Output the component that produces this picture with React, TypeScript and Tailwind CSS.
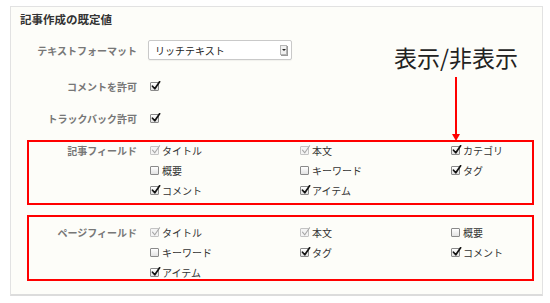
import React from "react";

type Field = { label: string; checked: boolean; disabled?: boolean };

const entryFields: Field[] = [
  { label: "タイトル", checked: true, disabled: true },
  { label: "本文", checked: true, disabled: true },
  { label: "カテゴリ", checked: true },
  { label: "概要", checked: false },
  { label: "キーワード", checked: false },
  { label: "タグ", checked: true },
  { label: "コメント", checked: true },
  { label: "アイテム", checked: true },
];

const pageFields: Field[] = [
  { label: "タイトル", checked: true, disabled: true },
  { label: "本文", checked: true, disabled: true },
  { label: "概要", checked: false },
  { label: "キーワード", checked: false },
  { label: "タグ", checked: true },
  { label: "コメント", checked: true },
  { label: "アイテム", checked: true },
];

const Checkbox = ({ checked, disabled }: { checked: boolean; disabled?: boolean }) => (
  <span
    className={`relative inline-block h-[9px] w-[9px] shrink-0 rounded-[1px] border ${
      disabled ? "border-[#c4c4c4] bg-[#f4f4f4]" : "border-[#8a8a8a] bg-gradient-to-b from-white to-[#e2e2e2]"
    }`}
  >
    {checked && (
      <svg viewBox="0 0 10 10" className="absolute -top-[2px] left-[0px] h-[10px] w-[10px]">
        <path
          d="M1.5 5.2 L3.8 7.8 L8.6 0.8"
          fill="none"
          stroke={disabled ? "#a8a8a8" : "#111"}
          strokeWidth={disabled ? 1.1 : 1.7}
          strokeLinecap="round"
          strokeLinejoin="round"
        />
      </svg>
    )}
  </span>
);

const FieldItem = ({ field }: { field: Field }) => (
  <div className="flex h-[20px] items-center gap-[3px]">
    <Checkbox checked={field.checked} disabled={field.disabled} />
    <span className="text-[10px] text-[#333]">{field.label}</span>
  </div>
);

const FieldBox = ({ title, fields, box, inner }: { title: string; fields: Field[]; box: string; inner: string }) => (
  <div className={`ml-[16px] mr-[8px] flex border-2 border-[#ff0000] ${box}`}>
    <div className={`w-[108px] text-right ${inner}`}>
      <div className="flex h-[20px] items-center justify-end text-[10px] font-bold text-[#777]">{title}</div>
    </div>
    <div className={`ml-[13px] grid h-fit grid-cols-[150px_151px_1fr] ${inner}`}>
      {fields.map((f, i) => (
        <FieldItem key={i} field={f} />
      ))}
    </div>
  </div>
);

export default function App() {
  return (
    <div className="min-h-[303px] bg-white pl-[10px] pt-[6px] font-['Noto_Sans_CJK_JP','Noto_Sans',sans-serif]">
      <div className="relative h-[290px] w-[533px] border border-[#e2e2e2] border-b-[2px] border-b-[#dcdcdc] bg-[#fdfdf9]">
        <h2 className="ml-[9px] mt-[5px] flex h-[16px] items-center text-[11.5px] font-bold text-[#333]">
          記事作成の既定値
        </h2>

        <div className="mt-[12px] flex h-[20px] items-center">
          <div className="w-[126px] text-right text-[10px] font-bold text-[#777]">テキストフォーマット</div>
          <div className="ml-[11px] flex h-[20px] w-[144px] items-center justify-between rounded-[2px] border border-[#c9c9c9] bg-white pl-[6px] pr-[4px] shadow-[0_1px_1px_rgba(0,0,0,0.05)]">
            <span className="text-[10px] text-[#222]">リッチテキスト</span>
            <span className="flex h-[10px] w-[7px] items-center justify-center border border-[#b5b5b5] bg-[#f0f0f0] shadow-[1px_1px_0_#999]">
              <span className="h-0 w-0 border-x-[2px] border-t-[2px] border-x-transparent border-t-[#222]" />
            </span>
          </div>
        </div>

        <div className="mt-[16px] flex h-[20px] items-center">
          <div className="w-[126px] text-right text-[10px] font-bold text-[#777]">コメントを許可</div>
          <div className="ml-[13px] flex items-center">
            <Checkbox checked />
          </div>
        </div>

        <div className="mt-[12px] flex h-[20px] items-center">
          <div className="w-[126px] text-right text-[10px] font-bold text-[#777]">トラックバック許可</div>
          <div className="ml-[13px] flex items-center">
            <Checkbox checked />
          </div>
        </div>

        <FieldBox title="記事フィールド" fields={entryFields} box="mt-[12px] h-[65px]" inner="-mt-[1.5px]" />
        <FieldBox title="ページフィールド" fields={pageFields} box="mt-[10px] h-[66px]" inner="mt-[5px]" />

        {/* annotation */}
        <div className="absolute left-[383px] top-[39px] text-[23px] leading-none text-[#222]">表示/非表示</div>
        <div className="absolute left-[444px] top-[70px] h-[58px] w-[2px] bg-[#ff0000]" />
        <div className="absolute left-[441px] top-[127px] h-0 w-0 border-x-[4px] border-t-[7px] border-x-transparent border-t-[#ff0000]" />
      </div>
    </div>
  );
}
